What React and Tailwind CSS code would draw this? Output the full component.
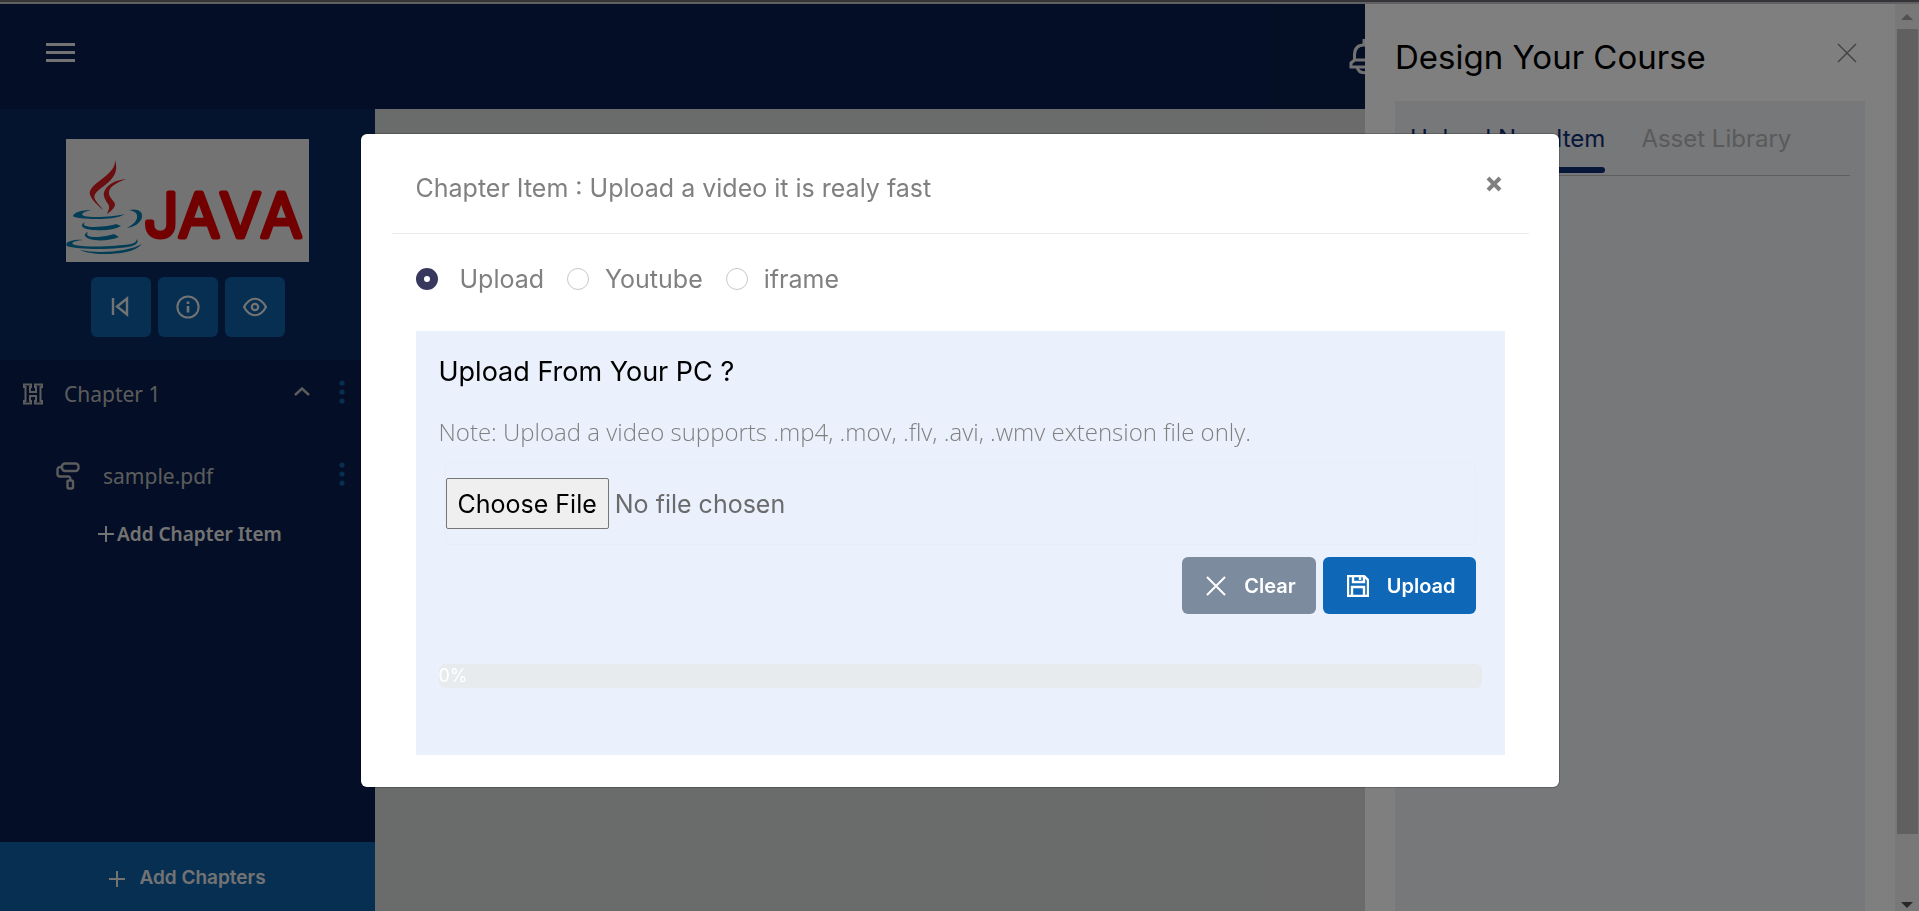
import React, { useState } from "react";

const SOURCES = [
  { id: "upload", label: "Upload" },
  { id: "youtube", label: "Youtube" },
  { id: "iframe", label: "iframe" },
];

function JavaLogo() {
  return (
    <svg viewBox="0 0 243 123" className="h-[123px] w-[243px] bg-white" role="img" aria-label="Java">
      <g fill="#ec2025">
        <path d="M49 21C53 33 47 40 38 47C30 53 26 56 30 62C32 65 35 68 37 71C29 64 22 57 24 52C27 45 36 41 43 34C48 29 49 26 49 21Z" />
        <path d="M60 40C50 44 42 48 43 55C44 60 49 62 49 66C48 70 44 73 41 75C43 70 44 68 42 65C39 60 36 56 39 51C43 44 51 41 60 40Z" />
      </g>
      <g fill="#0787bd">
        <path d="M25 71C17 73 14 75 18 77C27 79 47 78 59 75C53 79 43 80 31 80C19 80 8 79 7 77C8 73 17 71 25 71Z" />
        <path d="M63 71C72 69 77 73 76 78C75 84 68 88 61 89C68 85 72 81 71 76C70 73 67 72 63 71Z" />
        <path d="M19 83C16 87 20 87 25 88C34 88 45 87 50 85L55 87C48 91 38 92 29 91C18 91 12 87 19 83Z" />
        <path d="M22 93C19 97 24 98 29 98C37 98 44 96 48 95L53 98C46 101 36 102 28 101C17 99 17 95 22 93Z" />
        <path d="M17 101C8 102 3 104 9 106C25 109 52 107 65 105C70 104 70 102 71 100C74 106 65 108 53 109C36 111 8 110 1 107C-3 103 9 100 17 101Z" />
        <path d="M14 111C32 115 62 113 76 105C69 113 54 115 38 115C27 115 18 113 14 111Z" />
      </g>
      <text
        x="78"
        y="98"
        fontSize="61"
        fill="#ff0000"
        stroke="#ff0000"
        strokeWidth="5"
        strokeLinejoin="round"
        className="font-[Inter] font-light [font-kerning:none]"
      >
        JAVA
      </text>
    </svg>
  );
}

function Icon({ children, className, viewBox = "0 0 24 24", width = 2 }) {
  return (
    <svg
      viewBox={viewBox}
      className={className}
      fill="none"
      stroke="currentColor"
      strokeWidth={width}
      aria-hidden="true"
    >
      {children}
    </svg>
  );
}

function MoreButton({ label }) {
  return (
    <button type="button" aria-label={label} className="mb-1 flex w-6 justify-center text-[#0f68b7]">
      <svg viewBox="0 0 6 24" className="h-6 w-[6px]" fill="currentColor" aria-hidden="true">
        <circle cx="3" cy="3" r="2.6" />
        <circle cx="3" cy="12" r="2.6" />
        <circle cx="3" cy="21" r="2.6" />
      </svg>
    </button>
  );
}

function TopBar() {
  return (
    <header className="flex h-[105px] shrink-0 items-center justify-between bg-[#092154] pr-[540px] pl-[46px] text-white">
      <button type="button" aria-label="Toggle menu" className="mb-2 flex w-[29px] flex-col gap-[5px]">
        <span className="h-[3px] bg-white" />
        <span className="h-[3px] bg-white" />
        <span className="h-[3px] bg-white" />
      </button>
      <button type="button" aria-label="Notifications">
        <Icon className="h-[36px] w-[30px]" viewBox="0 0 30 36" width={3}>
          <path d="M15 0V6M5.500 21V16C5.500 9 9 6 15 6S24.500 9 24.500 16V21ZL2 24V28H28V24L24.500 21" />
          <path d="M8 28C10 35.500 20 35.500 22 28" />
        </Icon>
      </button>
    </header>
  );
}

function Sidebar() {
  return (
    <aside className="flex w-[375px] shrink-0 flex-col bg-[#092154] font-['Noto_Sans',sans-serif] text-[#cccccc]">
      <div className="flex flex-col items-center bg-[#0a2d68] pt-[30px] pb-[23px]">
        <JavaLogo />
        <div className="mt-[15px] flex gap-[7px] text-white">
          <button
            type="button"
            aria-label="Back"
            className="flex size-[60px] items-center justify-center rounded-md bg-[#0f68b7]"
          >
            <Icon className="size-6" width={2.4}>
              <path d="M4 3V20M18 3.500V19.500L8 11.500Z" />
            </Icon>
          </button>
          <button
            type="button"
            aria-label="Info"
            className="flex size-[60px] items-center justify-center rounded-md bg-[#0f68b7]"
          >
            <Icon className="size-6">
              <circle cx="12" cy="12" r="10.6" />
              <path d="M12 6.500V9M12 11V17.500" strokeWidth="2.6" />
            </Icon>
          </button>
          <button
            type="button"
            aria-label="Preview"
            className="flex size-[60px] items-center justify-center rounded-md bg-[#0f68b7]"
          >
            <Icon className="size-6" width={2.2}>
              <path d="M1 12C7 1 17 1 23 12C17 23 7 23 1 12Z" />
              <circle cx="12" cy="12" r="3.200" />
            </Icon>
          </button>
        </div>
      </div>

      <div className="flex h-[67px] items-center pr-[21px] pl-[23px]">
        <Icon className="h-[22px] w-5" viewBox="0 0 20 22">
          <path d="M1 1.500H8V4H7V9H13V4H12V1.500H19V4H17.500V18H19V20.500H12V18H13V13H7V18H8V20.500H1V18H2.500V4H1Z" />
        </Icon>
        <span className="ml-[21px] flex-1 text-[21px] leading-7">Chapter 1</span>
        <button type="button" aria-label="Collapse chapter" className="mr-[20px] mb-1">
          <Icon className="h-[9px] w-4" viewBox="0 0 16 9" width={2.4}>
            <path d="M1 8L8 1.500L15 8" />
          </Icon>
        </button>
        <MoreButton label="Chapter 1 options" />
      </div>

      <div className="mt-[17px] flex h-[64px] items-center pr-[21px] pl-14">
        <Icon className="h-7 w-6" viewBox="0 0 24 28" width={2.4}>
          <rect x="6" y="1.500" width="16.500" height="7.500" rx="3" />
          <path d="M6 5H5C2 5 1.500 6 1.500 8V12C1.500 14 2 14.500 4 14.500H12C14 14.500 14.500 15 14.500 18" />
          <rect x="11.500" y="18.500" width="5.500" height="8" rx="1.500" />
        </Icon>
        <span className="ml-[23px] flex-1 text-[21px] leading-7">sample.pdf</span>
        <MoreButton label="sample.pdf options" />
      </div>

      <button
        type="button"
        className="mt-[12px] ml-[98px] flex items-center gap-[3px] self-start text-[19px] leading-7 font-semibold text-white"
      >
        <Icon className="size-4" viewBox="0 0 16 16">
          <path d="M8 0V16M0 8H16" />
        </Icon>
        Add Chapter Item
      </button>

      <button
        type="button"
        className="mt-auto flex h-[69px] items-center justify-center gap-[14px] bg-[#0f68b7] pt-1 font-[Inter] text-[19px] font-semibold text-white"
      >
        <Icon className="size-4" viewBox="0 0 16 16">
          <path d="M8 0V16M0 8H16" />
        </Icon>
        Add Chapters
      </button>
    </aside>
  );
}

function CourseDrawer() {
  return (
    <div className="fixed top-1 right-0 bottom-0 flex w-[554px] bg-white">
      <section className="flex flex-1 flex-col px-[30px]">
        <div className="flex h-[97px] items-center justify-between pr-2">
          <h2 className="mt-2 text-[33px] leading-10 text-black">Design Your Course</h2>
          <button type="button" aria-label="Close panel" className="text-[#888888]">
            <Icon className="size-5" viewBox="0 0 20 20" width={1.5}>
              <path d="M1 1L19 19M19 1L1 19" />
            </Icon>
          </button>
        </div>
        <div className="flex-1 bg-[#eef0f3] px-[15px] pt-5">
          <div className="flex gap-[36px] border-b border-[#bcbcbc] pb-[2px] text-[24px] leading-9" role="tablist">
            <button
              type="button"
              role="tab"
              aria-selected="true"
              className="flex flex-col gap-[10px] text-[#0e2e73]"
            >
              Upload New Item
              <span className="h-[6px] w-full rounded-full bg-[#0c2f72]" />
            </button>
            <button type="button" role="tab" aria-selected="false" className="self-start text-[#b5b5b5]">
              Asset Library
            </button>
          </div>
        </div>
      </section>
      <div className="flex w-6 flex-col items-center bg-[#f1f1f1]">
        <svg viewBox="0 0 24 25" className="h-[25px] w-6" fill="#a3a3a3" aria-hidden="true">
          <path d="M6 16L12 10L18 16Z" />
        </svg>
        <div className="w-[21px] flex-1 bg-[#c1c1c1]" />
        <svg viewBox="0 0 24 77" className="h-[77px] w-6" fill="#505050" aria-hidden="true">
          <path d="M6 68H18L12 74Z" />
        </svg>
      </div>
    </div>
  );
}

function UploadModal() {
  const [source, setSource] = useState("upload");

  return (
    <div className="fixed inset-0 flex items-start justify-center overflow-y-auto bg-black/50 pt-[134px]">
      <div
        role="dialog"
        aria-modal="true"
        aria-labelledby="modal-title"
        className="w-full max-w-[1198px] rounded-md bg-white pr-[30px] pb-8 pl-[31px] text-[#808080] shadow-[0_0_0_1px_rgba(0,0,0,0.2)]"
      >
        <div className="flex h-[100px] items-center justify-between border-b border-[#e9ecef] px-6">
          <h1 id="modal-title" className="mt-2 text-[25px] leading-9">
            Chapter Item : Upload a video it is realy fast
          </h1>
          <button type="button" aria-label="Close" className="mr-[3px]">
            <Icon className="size-4" viewBox="0 0 16 16" width={4}>
              <path d="M2 2L14 14M14 2L2 14" />
            </Icon>
          </button>
        </div>

        <div className="px-6">
          <div className="flex gap-[23px] py-[27px] text-[25px] leading-9">
            {SOURCES.map(({ id, label }) => (
              <label key={id} className="flex items-center gap-4 first:gap-[22px]">
                <input
                  type="radio"
                  name="source"
                  value={id}
                  checked={source === id}
                  onChange={() => setSource(id)}
                  className="size-[22px] appearance-none rounded-full border border-[#c8c8c8] bg-white checked:border-8 checked:border-[#38385f]"
                />
                {label}
              </label>
            ))}
          </div>

          <div className="mt-[7px] bg-[#eaf1fd] px-[23px] pt-[23px] pb-[67px]">
            <h2 className="text-[27px] leading-9 text-black">Upload From Your PC ?</h2>
            <p className="mt-[24px] font-['Open_Sans',sans-serif] text-[24px] leading-9 font-light">
              Note: Upload a video supports .mp4, .mov, .flv, .avi, .wmv extension file only.
            </p>
            <input
              type="file"
              aria-label="Video file"
              accept=".mp4,.mov,.flv,.avi,.wmv"
              className="mx-[6px] mt-[12px] block h-[83px] w-[1031px] max-w-full rounded-md border border-[#e7eefa] py-[15px] text-[25px] leading-9 text-[#6b6b6b] file:mr-[6px] file:h-[51px] file:rounded-xs file:border file:border-solid file:border-[#767676] file:bg-[#efefef] file:px-[11px] file:text-black"
            />
            <div className="mt-[12px] mr-[6px] flex justify-end gap-[7px] text-[20px] font-semibold text-white">
              <button type="button" className="flex h-[57px] items-center rounded-md bg-[#7c8c9e] pr-5 pl-6">
                <Icon className="mr-[18px] size-5" viewBox="0 0 20 20">
                  <path d="M1 1L19 19M19 1L1 19" />
                </Icon>
                Clear
              </button>
              <button type="button" className="flex h-[57px] items-center rounded-md bg-[#0f68b7] pr-5 pl-6">
                <Icon className="mr-[18px] size-[22px]" viewBox="0 0 22 22" width={2.4}>
                  <path d="M1 1H17L21 5V21H1Z" />
                  <path d="M6 1V7H17V1M13 2V5M5 21V12H17V21" />
                </Icon>
                Upload
              </button>
            </div>
            <div
              role="progressbar"
              aria-label="Upload progress"
              aria-valuenow={0}
              aria-valuemin={0}
              aria-valuemax={100}
              className="mt-[50px] h-6 rounded-md bg-[#e7ebed] text-[18px] leading-6 text-white"
            >
              0%
            </div>
          </div>
        </div>
      </div>
    </div>
  );
}

function App() {
  return (
    <div className="flex min-h-screen flex-col font-[Inter,sans-serif]">
      <div className="h-1 shrink-0 border-b-2 border-[#d8d8d8] bg-[#78787f]" />
      <TopBar />
      <div className="flex flex-1">
        <Sidebar />
        <main className="flex-1 bg-[#ecf0ee]" />
      </div>
      <div className="fixed inset-0 bg-black/10" />
      <CourseDrawer />
      <UploadModal />
    </div>
  );
}

export default App;
